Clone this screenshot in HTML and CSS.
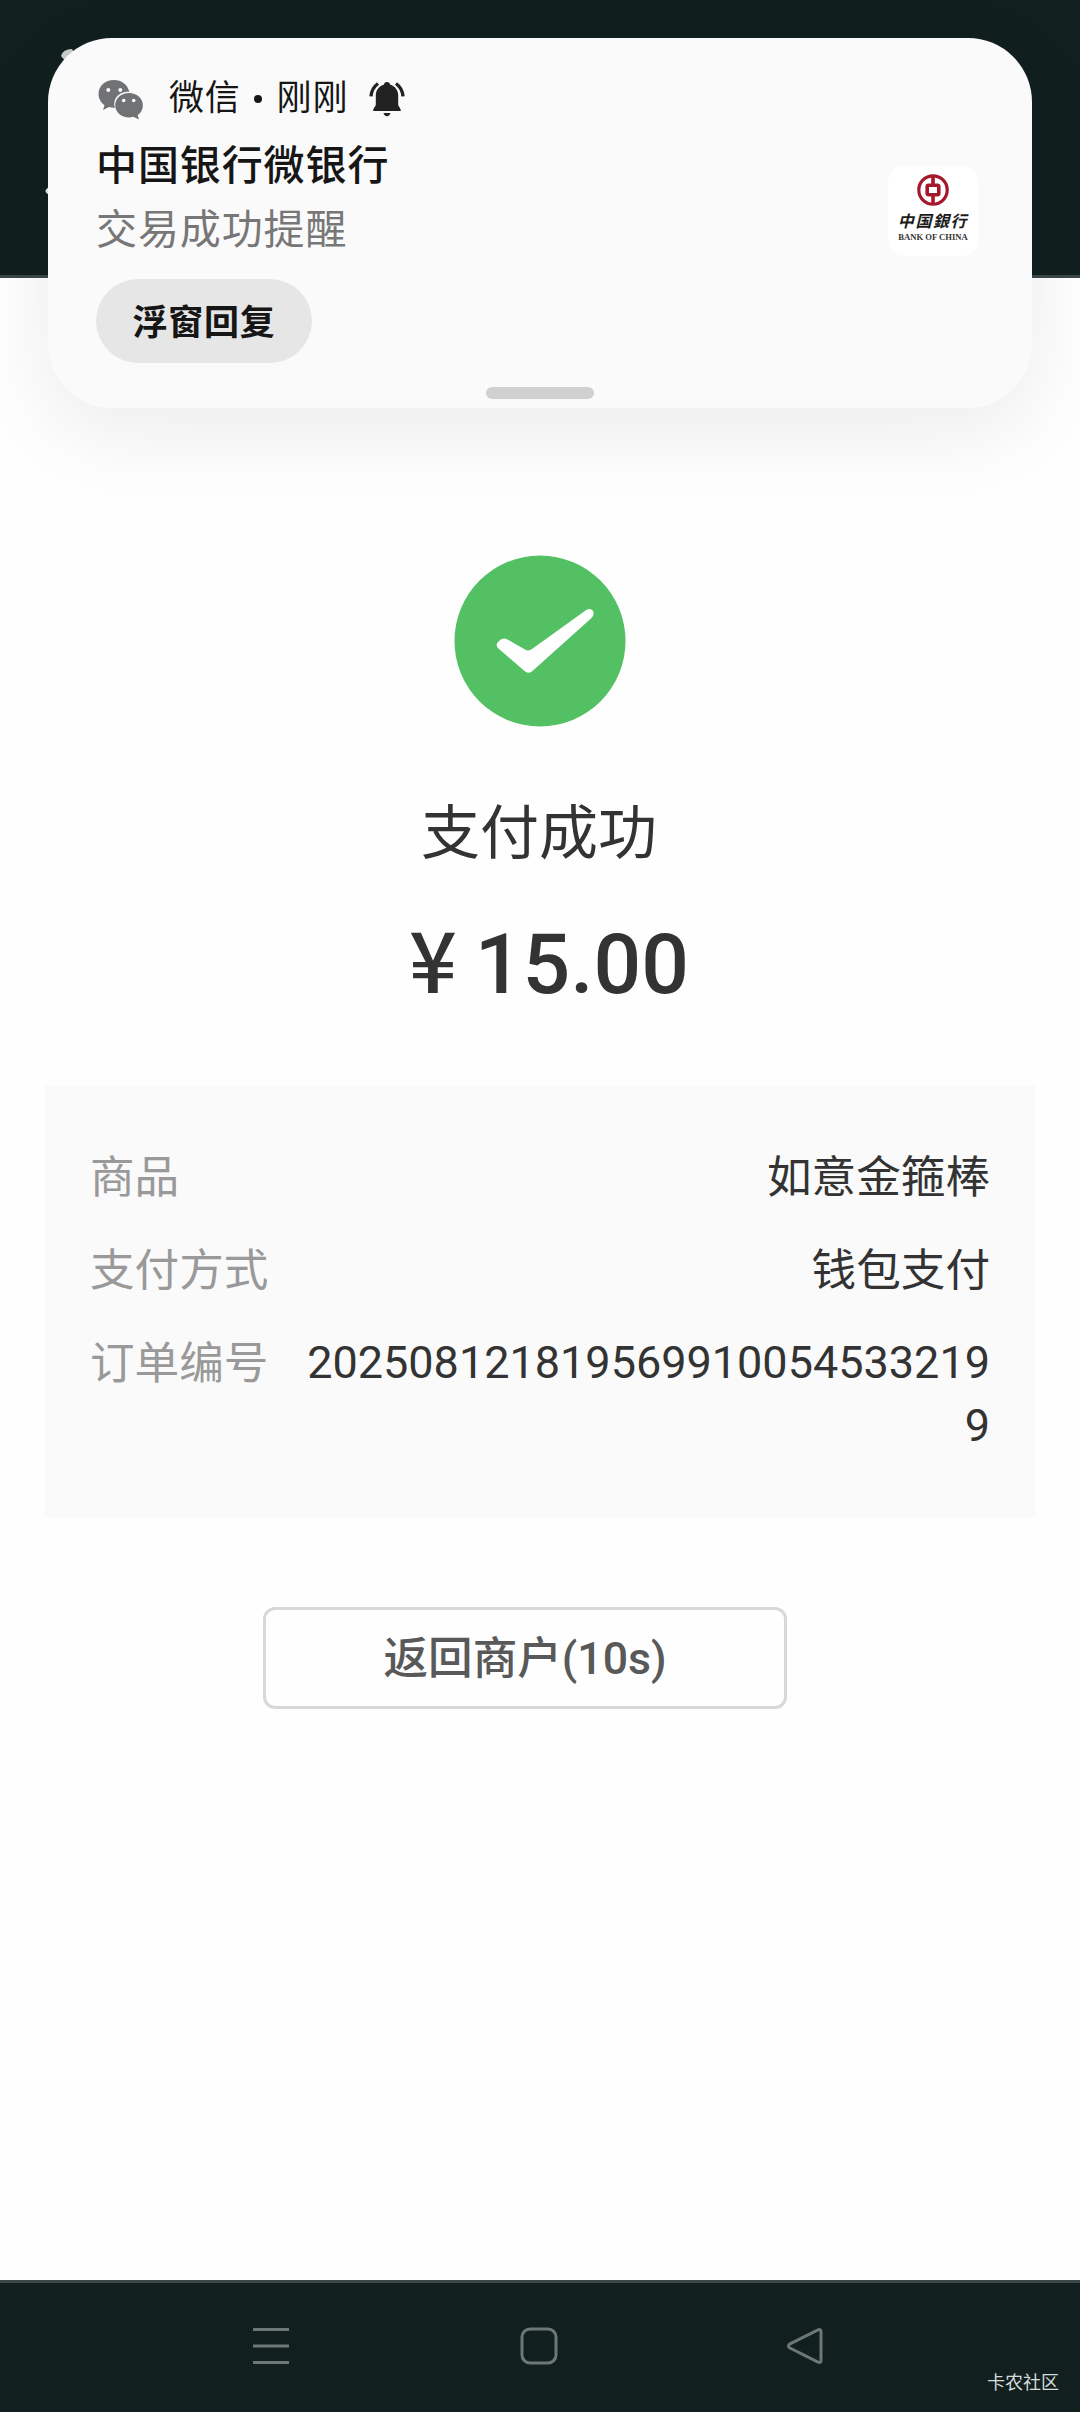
FILE: index.html
```
<!DOCTYPE html>
<html lang="zh-CN">
<head>
    <meta charset="utf-8">
    <title>支付成功</title>
    <link rel="stylesheet" href="styles.css">
</head>
<body>
<div class="header">
    <svg class="header_marks" width="80" height="275" viewBox="0 0 80 275">
        <path d="M61 56 Q63 49 72 49 L78 60 L66 62 Z" fill="#c9cfce"/>
        <path d="M66 174 L48 191 L66 208" fill="none" stroke="#e4eae9" stroke-width="5" stroke-linecap="round" stroke-linejoin="round"/>
    </svg>
</div>

<div class="notice">
    <div class="notice_top">
        <svg class="wechat" width="46" height="40" viewBox="0 0 46 40">
            <path fill="#707274" d="M16 1C7 1 .5 7 .5 15c0 4.600 2.200 8.600 6 11.300L5 31l6-3c1.600.5 3.300.7 5 .7h1C14 19 22 12 31.300 12.700 29.500 5.500 23.500 1 16 1z"/>
            <path fill="#707274" d="M31 14c-7.600 0-13.800 5.300-13.800 12.200S23.400 38.400 31 38.400c1.500 0 3-.2 4.300-.6l5.700 2.600-1.300-4.200c3.200-2.300 5.200-5.900 5.200-10C44.900 19.300 38.600 14 31 14z"/>
            <g fill="#fafafa">
                <circle cx="10.300" cy="11" r="2"/>
                <circle cx="22.300" cy="11" r="2"/>
                <circle cx="25.700" cy="21.500" r="1.800"/>
                <circle cx="35.700" cy="21.500" r="1.800"/>
            </g>
        </svg>
        <span class="app">微信</span><span class="dot"></span><span class="app">刚刚</span>
        <svg class="bell" width="36" height="36" viewBox="0 0 36 36">
            <path fill="#222" d="M18 1c1.800 0 3 1.100 3.200 2.800 4.800 1.300 8 5.500 8 10.700v8.700c0 2.600 2.600 3.200 2.600 6.800H4.200c0-3.600 2.600-4.200 2.600-6.800v-8.700c0-5.200 3.200-9.400 8-10.700C15 2.100 16.200 1 18 1zM14.500 32h7c-.4 2-1.800 3.200-3.500 3.200s-3.100-1.200-3.500-3.200z"/>
            <path fill="none" stroke="#222" stroke-width="3.400" d="M9 2.500C5 5.500 2.400 9.500 2 15.300M27 2.500c4 3 6.600 7 7 12.800"/>
        </svg>
    </div>
    <div class="notice_body">
        <div>
            <div class="notice_title">中国银行微银行</div>
            <div class="notice_text">交易成功提醒</div>
        </div>
        <div class="bank">
            <svg width="32" height="32" viewBox="0 0 32 32">
                <g fill="none" stroke="#a5182c">
                    <circle cx="16" cy="16" r="14.200" stroke-width="3.200"/>
                    <rect x="10.200" y="11.200" width="11.600" height="9.600" rx="1.500" stroke-width="3.600"/>
                    <path d="M16 2v9M16 21v9" stroke-width="3.600"/>
                </g>
            </svg>
            <div class="bank_cn">中国銀行</div>
            <div class="bank_en">BANK OF CHINA</div>
        </div>
    </div>
    <div class="reply">浮窗回复</div>
    <div class="handle"></div>
</div>

<div class="content">
    <svg class="check" width="172" height="172" viewBox="0 0 172 172">
        <circle cx="86" cy="86" r="85.500" fill="#53c064"/>
        <path fill="#fff" d="M44.500 86.500Q48.500 82 53.500 84.500L71 94.500Q74.500 96.500 78 94L131.500 55.500Q136.500 52.500 139 56Q141 59.500 137 63.500L79 115.500Q74.500 120 70 115.500L45 94Q40.500 90.500 44.500 86.500Z"/>
    </svg>
    <div class="status">支付成功</div>
    <div class="amount"><span class="yen">¥</span> 15.00</div>

    <div class="detail">
        <div class="row">
            <span class="label">商品</span>
            <span class="value">如意金箍棒</span>
        </div>
        <div class="row">
            <span class="label">支付方式</span>
            <span class="value">钱包支付</span>
        </div>
        <div class="row">
            <span class="label">订单编号</span>
            <span class="value number">2025081218195699100545332199</span>
        </div>
    </div>

    <div class="back">返回商户(10s)</div>
</div>

<div class="nav">
    <svg width="40" height="40" viewBox="0 0 40 40">
        <path d="M2 3.500h36M2 20h36M2 36.500h36"/>
    </svg>
    <svg width="40" height="40" viewBox="0 0 40 40">
        <rect x="3" y="3" width="34" height="34" rx="8"/>
    </svg>
    <svg width="40" height="40" viewBox="0 0 40 40">
        <path d="M2.500 18.200 L31 3.800 Q34 2.800 34 5.500 V34.500 Q34 37.200 31 36.200 L2.500 21.800 Q0.500 20 2.500 18.200Z"/>
    </svg>
    <div class="watermark">卡农社区</div>
</div>
</body>
</html>
```
FILE: styles.css
```
* {
  box-sizing: border-box;
}

body {
  margin: 0;
  width: 1080px;
  height: 2412px;
  display: flex;
  flex-direction: column;
  position: relative;
  overflow: hidden;
  background-color: #fefefe;
  color: #333333;
  font-family: Roboto, "Noto Sans CJK SC", sans-serif;
}

svg {
  display: block;
  overflow: visible;
}

.header {
  height: 278px;
  flex: none;
  background-color: #111f1f;
  border-bottom: 3px solid #3b4847;
}

/* notification card, floats over the page */
.notice {
  position: absolute;
  left: 48px;
  top: 38px;
  width: 984px;
  height: 370px;
  padding: 37px 54px 9px 48px;
  display: flex;
  flex-direction: column;
  background-color: #fafafa;
  border-radius: 64px;
  box-shadow: 0 24px 84px rgba(0, 0, 0, 0.075);
}

.notice_top {
  display: flex;
  align-items: center;
  height: 48px;
}

.wechat {
  margin-left: 2px;
}

.app {
  color: #161616;
  font-size: 35px;
  line-height: 48px;
  letter-spacing: 0.8px;
}

.wechat + .app {
  margin-left: 25px;
}

.dot {
  width: 8px;
  height: 8px;
  margin: 0 15px 0 13px;
  border-radius: 50%;
  background-color: #161616;
}

.bell {
  margin-left: 21px;
}

.notice_body {
  display: flex;
  justify-content: space-between;
  height: 156px;
}

.notice_title, .notice_text {
  height: 64px;
  font-size: 41px;
  line-height: 64px;
  letter-spacing: 0.9px;
}

.notice_title {
  margin-top: 11px;
  color: #161616;
  font-weight: 500;
}

.notice_text {
  color: #777777;
}

.bank {
  width: 90px;
  height: 90px;
  margin-top: 43px;
  padding-top: 8px;
  display: flex;
  flex-direction: column;
  align-items: center;
  background-color: #ffffff;
  border-radius: 16px;
}

.bank_cn {
  margin-top: 4px;
  color: #1c1c1c;
  font-family: "Noto Sans CJK SC", sans-serif;
  font-size: 16px;
  font-weight: 700;
  font-style: italic;
  letter-spacing: 1.6px;
  line-height: 20px;
  white-space: nowrap;
}

.bank_en {
  margin-top: 2px;
  color: #333333;
  font-family: "Liberation Serif", serif;
  font-size: 8.6px;
  font-weight: 700;
  line-height: 10px;
  white-space: nowrap;
}

.reply {
  width: 216px;
  height: 84px;
  flex: none;
  border-radius: 42px;
  background-color: #e6e6e6;
  color: #161616;
  font-size: 35px;
  font-weight: 700;
  letter-spacing: 0.8px;
  line-height: 90px;
  text-align: center;
}

.handle {
  width: 108px;
  height: 12px;
  margin: 24px 0 0 390px;
  border-radius: 6px;
  background-color: #d0d0d0;
}

.content {
  flex: 1;
  padding: 277px 45px 0;
  display: flex;
  flex-direction: column;
  align-items: center;
}

.status {
  height: 84px;
  margin-top: 65px;
  padding-right: 2px;
  font-size: 59px;
  line-height: 84px;
}

.amount {
  height: 118px;
  margin: 30px 0 0 15px;
  font-size: 84px;
  font-weight: 500;
  line-height: 118px;
}

.yen {
  margin: 0 -3px 0 3px;
  font-family: "Noto Sans CJK SC", sans-serif;
  line-height: 1;
}

.detail {
  width: 990px;
  height: 432px;
  margin-top: 61px;
  padding: 60px 45px;
  display: flex;
  flex-direction: column;
  gap: 28px;
  background-color: #fafafa;
}

.row {
  display: flex;
  justify-content: space-between;
  font-size: 44.6px;
  line-height: 63px;
}

.label, .value {
  padding-top: 2px;
}

.label {
  flex: none;
  color: #999999;
}

.value {
  text-align: right;
}

.number {
  width: 690px;
  padding-top: 0;
  font-size: 45px;
  word-break: break-all;
}

.back {
  width: 524px;
  height: 102px;
  margin: 90px 30px 0 0;
  border: 3px solid #d8d8d8;
  border-radius: 12px;
  color: #595959;
  font-size: 44.6px;
  font-weight: 500;
  line-height: 98px;
  text-align: center;
}

.nav {
  position: relative;
  height: 132px;
  flex: none;
  display: flex;
  gap: 228px;
  padding: 43px 0 0 251px;
  background-color: #111f1f;
  border-top: 3px solid #3b4847;
}

.nav svg {
  fill: none;
  stroke: #6c7876;
  stroke-width: 3;
}

.watermark {
  position: absolute;
  right: 21px;
  bottom: 17px;
  color: #d5dcdb;
  font-size: 18px;
  line-height: 24px;
}
```
